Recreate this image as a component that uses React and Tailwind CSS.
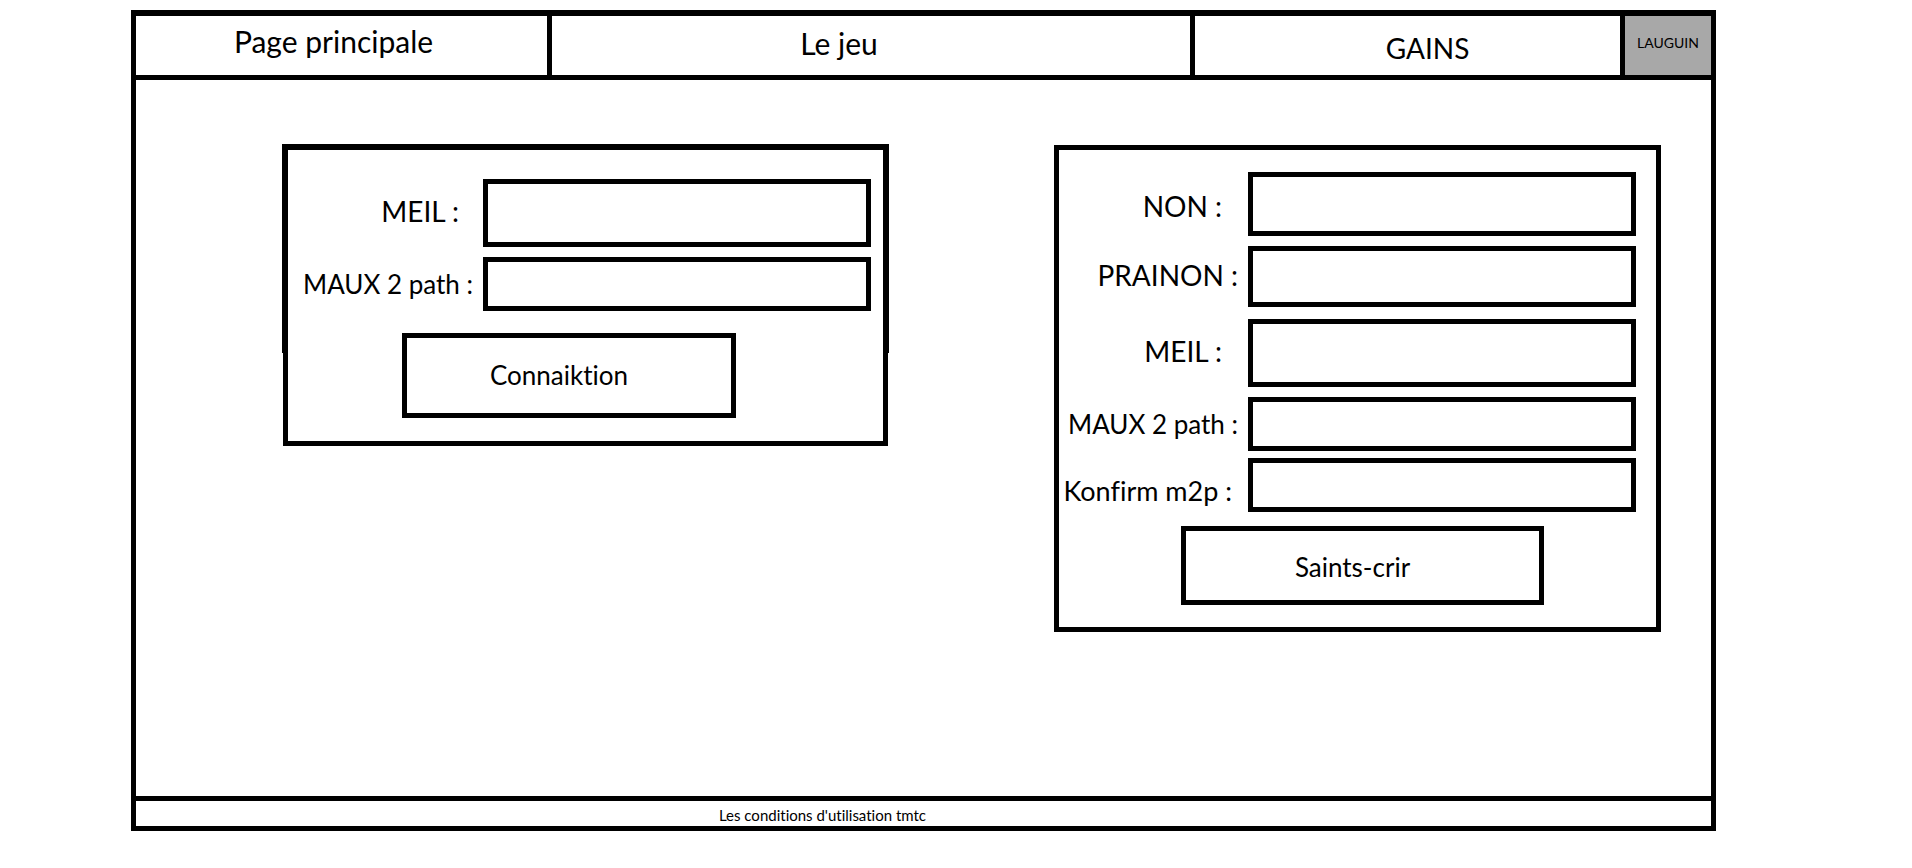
import React from "react";

const field =
  "min-w-0 flex-1 border-[5px] border-black bg-white px-3 text-2xl outline-none";

function Field({ id, label, type = "text", labelClass, inputClass, columnClass }) {
  return (
    <div className="flex items-center">
      <label
        htmlFor={id}
        className={`shrink-0 whitespace-nowrap text-right ${columnClass} ${labelClass}`}
      >
        {label}
      </label>
      <input id={id} name={id} type={type} className={`${field} ${inputClass}`} />
    </div>
  );
}

function LoginForm() {
  return (
    <form
      onSubmit={(e) => e.preventDefault()}
      className="relative border-[5px] border-t-[6px] border-black pr-3 pb-[23px] pt-[29px]"
    >
      {/* thicker upper part of the panel outline */}
      <span
        aria-hidden="true"
        className="pointer-events-none absolute -inset-x-[6px] -top-[6px] h-[209px] border-x-[6px] border-black"
      />
      <Field
        id="login-mail"
        type="email"
        label="MEIL :"
        columnClass="w-[195px]"
        labelClass="pb-1 pr-6 text-[28px]"
        inputClass="h-[68px]"
      />
      <div className="mt-[10px]">
        <Field
          id="login-password"
          type="password"
          label="MAUX 2 path :"
          columnClass="w-[195px]"
          labelClass="pr-[10px] text-[26px]"
          inputClass="h-[54px]"
        />
      </div>
      <button
        type="submit"
        className="ml-[114px] mt-[22px] block h-[85px] w-[334px] border-[5px] border-black pr-5 text-[26px]"
      >
        Connaiktion
      </button>
    </form>
  );
}

function SignupForm() {
  return (
    <form
      onSubmit={(e) => e.preventDefault()}
      className="mt-px border-[5px] border-black pb-[22px] pr-5 pt-[22px]"
    >
      <Field
        id="signup-name"
        label="NON :"
        columnClass="w-[189px]"
        labelClass="pr-[26px] pt-1 text-[28px]"
        inputClass="h-[64px]"
      />
      <div className="mt-[10px]">
        <Field
          id="signup-firstname"
          label="PRAINON :"
          columnClass="w-[189px]"
          labelClass="pb-1 pr-[10px] text-[28px]"
          inputClass="h-[61px]"
        />
      </div>
      <div className="mt-3">
        <Field
          id="signup-mail"
          type="email"
          label="MEIL :"
          columnClass="w-[189px]"
          labelClass="pb-1 pr-[26px] text-[28px]"
          inputClass="h-[68px]"
        />
      </div>
      <div className="mt-[10px]">
        <Field
          id="signup-password"
          type="password"
          label="MAUX 2 path :"
          columnClass="w-[189px]"
          labelClass="pr-[10px] text-[26px]"
          inputClass="h-[54px]"
        />
      </div>
      <div className="mt-[7px]">
        <Field
          id="signup-confirm"
          type="password"
          label="Konfirm m2p :"
          columnClass="w-[189px]"
          labelClass="pr-4 pt-3 text-[27px]"
          inputClass="h-[54px]"
        />
      </div>
      <button
        type="submit"
        className="ml-[122px] mt-[14px] block h-[79px] w-[363px] border-[5px] border-black pr-5 pt-1 text-[26px]"
      >
        Saints-crir
      </button>
    </form>
  );
}

export default function App() {
  return (
    <div className="flex min-h-screen flex-col bg-white pb-[37px] pl-[131px] pr-[196px] pt-[10px] font-[Lato,'Liberation_Sans',sans-serif] text-black [font-variant-ligatures:none]">
      <div className="flex flex-1 flex-col border-[5px] border-t-[6px] border-black">
        <header className="border-b-[5px] border-black">
          <nav className="grid h-[59px] grid-cols-[416fr_643fr_430fr_86fr] text-[28px]">
            <a href="#accueil" className="flex items-center justify-center border-r-[5px] border-black pb-2 pr-4 text-[30px]">
              Page principale
            </a>
            <a href="#jeu" className="flex items-center justify-center border-r-[5px] border-black pb-1 pr-16 text-[30px]">
              Le jeu
            </a>
            <a href="#gains" className="flex items-center justify-center border-r-[5px] border-black pl-10 pt-1">
              GAINS
            </a>
            <button type="button" className="bg-[#a8a8a8] pb-[6px] text-sm">
              LAUGUIN
            </button>
          </nav>
        </header>
        <main className="grid flex-1 grid-cols-[605fr_607fr] items-start gap-x-[166px] pb-16 pl-[147px] pr-[50px] pt-16">
          <LoginForm />
          <SignupForm />
        </main>
        <footer className="flex h-[30px] items-center justify-center border-t-[5px] border-black pr-[202px] pt-1 text-[15px]">
          <a href="#conditions">Les conditions d'utilisation tmtc</a>
        </footer>
      </div>
    </div>
  );
}
